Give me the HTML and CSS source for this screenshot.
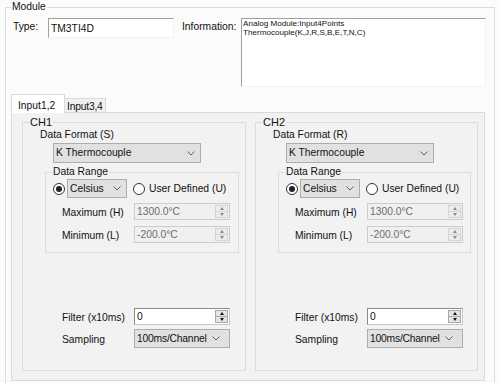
FILE: index.html
```html
<!DOCTYPE html>
<html>
<head>
<meta charset="utf-8">
<link rel="stylesheet" href="styles.css">
</head>
<body>
<fieldset class="module">
  <legend class="legend">Module</legend>
  <div class="info-row">
    <span class="lbl type-lbl">Type:</span>
    <div class="textbox type-box">TM3TI4D</div>
    <span class="lbl info-lbl">Information:</span>
    <div class="textbox info-box">Analog Module:Input4Points<br>Thermocouple(K,J,R,S,B,E,T,N,C)</div>
  </div>
  <div class="tabs">
    <div class="tab tab-active">Input1,2</div>
    <div class="tab tab-inactive">Input3,4</div>
  </div>
  <div class="tabpage">
    <fieldset class="ch">
      <legend class="legend ch-legend">CH1</legend>
      <div class="df-label">Data Format (S)</div>
      <div class="combo df-combo"><span class="combo-text">K Thermocouple</span><svg class="chev" width="8" height="5" viewBox="0 0 8 5"><polyline points="0.5,0.5 4,4 7.5,0.5" fill="none" stroke="#606060" stroke-width="1"/></svg></div>
      <fieldset class="range">
        <legend class="legend range-legend">Data Range</legend>
        <div class="radio-row">
          <span class="radio radio-on"></span>
          <div class="combo unit-combo"><span class="combo-text">Celsius</span><svg class="chev" width="8" height="5" viewBox="0 0 8 5"><polyline points="0.5,0.5 4,4 7.5,0.5" fill="none" stroke="#606060" stroke-width="1"/></svg></div>
          <span class="radio radio-off"></span>
          <span class="radio-lbl">User Defined (U)</span>
        </div>
        <div class="num-row">
          <span class="num-lbl">Maximum (H)</span>
          <div class="spin spin-disabled"><span class="spin-val">1300.0°C</span><div class="spin-btns"><span class="sb sb-up"></span><span class="sb sb-down"></span></div></div>
        </div>
        <div class="num-row num-row-2">
          <span class="num-lbl">Minimum (L)</span>
          <div class="spin spin-disabled"><span class="spin-val">-200.0°C</span><div class="spin-btns"><span class="sb sb-up"></span><span class="sb sb-down"></span></div></div>
        </div>
      </fieldset>
      <div class="bottom">
        <div class="bot-row">
          <span class="num-lbl">Filter (x10ms)</span>
          <div class="spin spin-enabled"><span class="spin-val">0</span><div class="spin-btns"><span class="sb sb-up"></span><span class="sb sb-down"></span></div></div>
        </div>
        <div class="bot-row bot-row-2">
          <span class="num-lbl">Sampling</span>
          <div class="combo samp-combo"><span class="combo-text">100ms/Channel</span><svg class="chev" width="8" height="5" viewBox="0 0 8 5"><polyline points="0.5,0.5 4,4 7.5,0.5" fill="none" stroke="#606060" stroke-width="1"/></svg></div>
        </div>
      </div>
    </fieldset>
    <fieldset class="ch">
      <legend class="legend ch-legend">CH2</legend>
      <div class="df-label">Data Format (R)</div>
      <div class="combo df-combo"><span class="combo-text">K Thermocouple</span><svg class="chev" width="8" height="5" viewBox="0 0 8 5"><polyline points="0.5,0.5 4,4 7.5,0.5" fill="none" stroke="#606060" stroke-width="1"/></svg></div>
      <fieldset class="range">
        <legend class="legend range-legend">Data Range</legend>
        <div class="radio-row">
          <span class="radio radio-on"></span>
          <div class="combo unit-combo"><span class="combo-text">Celsius</span><svg class="chev" width="8" height="5" viewBox="0 0 8 5"><polyline points="0.5,0.5 4,4 7.5,0.5" fill="none" stroke="#606060" stroke-width="1"/></svg></div>
          <span class="radio radio-off"></span>
          <span class="radio-lbl">User Defined (U)</span>
        </div>
        <div class="num-row">
          <span class="num-lbl">Maximum (H)</span>
          <div class="spin spin-disabled"><span class="spin-val">1300.0°C</span><div class="spin-btns"><span class="sb sb-up"></span><span class="sb sb-down"></span></div></div>
        </div>
        <div class="num-row num-row-2">
          <span class="num-lbl">Minimum (L)</span>
          <div class="spin spin-disabled"><span class="spin-val">-200.0°C</span><div class="spin-btns"><span class="sb sb-up"></span><span class="sb sb-down"></span></div></div>
        </div>
      </fieldset>
      <div class="bottom">
        <div class="bot-row">
          <span class="num-lbl">Filter (x10ms)</span>
          <div class="spin spin-enabled"><span class="spin-val">0</span><div class="spin-btns"><span class="sb sb-up"></span><span class="sb sb-down"></span></div></div>
        </div>
        <div class="bot-row bot-row-2">
          <span class="num-lbl">Sampling</span>
          <div class="combo samp-combo"><span class="combo-text">100ms/Channel</span><svg class="chev" width="8" height="5" viewBox="0 0 8 5"><polyline points="0.5,0.5 4,4 7.5,0.5" fill="none" stroke="#606060" stroke-width="1"/></svg></div>
        </div>
      </div>
    </fieldset>
  </div>
</fieldset>
</body>
</html>
```
FILE: styles.css
```css
html, body {
  margin: 0;
  padding: 0;
  background: #fbfbfb;
  overflow: hidden;
  height: 383px;
}
body {
  font-family: "Liberation Sans", Arial, sans-serif;
  font-size: 10.3px;
  line-height: 12px;
  color: #111;
}
.module {
  margin: 0 5px;
  padding: 0;
  border: 1px solid #dcdcdc;
  border-bottom: none;
  min-width: 0;
  height: 383px;
  box-sizing: border-box;
}
.legend {
  padding: 0 1px;
  line-height: 14px;
  margin-left: 5px;
}
.info-row {
  display: flex;
  align-items: flex-start;
  margin-top: 4px;
  padding-left: 7px;
}
.lbl {
  padding-top: 3px;
}
.type-lbl {
  width: 35px;
}
.textbox {
  box-sizing: border-box;
  background: #fff;
  border-top: 1px solid #a0a0a0;
  border-left: 1px solid #a0a0a0;
  border-right: 1px solid #f4f4f4;
  border-bottom: 1px solid #f4f4f4;
}
.type-box {
  width: 126px;
  height: 20px;
  padding: 4px 2px 0;
}
.info-lbl {
  margin-left: 8px;
  width: 59px;
}
.info-box {
  width: 245px;
  height: 69px;
  padding: 1px 1px 0;
  font-size: 8.1px;
  line-height: 8.7px;
}
.tabs {
  display: flex;
  align-items: flex-end;
  margin-top: 7px;
  padding-left: 5px;
}
.tab {
  box-sizing: border-box;
  border: 1px solid #d9d9d9;
  border-bottom: none;
}
.tab-active {
  width: 54px;
  height: 19px;
  margin-bottom: -1px;
  background: #fff;
  padding: 5px 0 0 6px;
  position: relative;
  z-index: 1;
}
.tab-inactive {
  width: 41px;
  height: 14px;
  border-left: none;
  background: #f0f0f0;
  padding: 2px 0 0 2px;
  letter-spacing: -0.2px;
}
.tabpage {
  box-sizing: border-box;
  width: 474px;
  height: 269px;
  margin-left: 5px;
  border: 1px solid #d9d9d9;
  background: #f2f2f2;
  padding: 3px 7px 8px 10px;
  display: grid;
  grid-template-columns: 224px 223px;
  column-gap: 9px;
  align-items: start;
}
.ch {
  margin: 0;
  padding: 0 0 22px;
  border: 1px solid #dcdcdc;
  min-width: 0;
}
.ch-legend {
  line-height: 12px;
  margin-left: 6px;
  font-size: 11px;
}
.df-label {
  margin: 1px 0 0 17px;
}
.combo {
  box-sizing: border-box;
  display: flex;
  align-items: center;
  border: 1px solid #adadad;
  background: #e1e1e1;
  padding: 0 5px 0 2px;
}
.combo-text {
  flex: 1;
}
.chev {
  display: block;
}
.df-combo {
  margin: 2px 0 0 30px;
  width: 148px;
  height: 20px;
}
.range {
  margin: 3px 6px 0 22px;
  padding: 0 0 9px;
  border: 1px solid #dcdcdc;
  min-width: 0;
}
.range-legend {
  line-height: 12px;
  margin-left: 6px;
}
.radio-row {
  display: flex;
  align-items: center;
  margin-top: 1px;
  padding-left: 7px;
  height: 19px;
}
.radio {
  box-sizing: border-box;
  width: 12px;
  height: 12px;
  border: 1px solid #333;
  border-radius: 50%;
  background: #fff;
  display: flex;
  align-items: center;
  justify-content: center;
}
.radio-on::after {
  content: "";
  width: 6px;
  height: 6px;
  border-radius: 50%;
  background: #222;
}
.unit-combo {
  margin-left: 2px;
  width: 60px;
  height: 19px;
}
.radio-off {
  margin-left: 6px;
}
.radio-lbl {
  margin-left: 4px;
}
.num-row {
  display: flex;
  align-items: center;
  margin-top: 5px;
  padding-left: 16px;
}
.num-row-2 {
  margin-top: 6px;
}
.num-lbl {
  width: 72px;
  padding-top: 2px;
}
.spin {
  box-sizing: border-box;
  display: flex;
  width: 96px;
  height: 17px;
  padding: 1px;
}
.spin-disabled {
  border: 1px solid #cccccc;
  background: #f0f0f0;
  color: #6d6d6d;
}
.spin-enabled {
  border: 1px solid #8a8a8a;
  border-right-color: #c8c8c8;
  border-bottom-color: #c8c8c8;
  background: #fff;
}
.spin-val {
  flex: 1;
  padding-left: 1px;
  line-height: 13px;
}
.spin-btns {
  width: 13px;
  display: flex;
  flex-direction: column;
}
.sb {
  flex: 1;
  box-sizing: border-box;
  display: flex;
  align-items: center;
  justify-content: center;
  background: #ececec;
  border: 1px solid #d4d4d4;
}
.sb-down {
  border-top: none;
}
.spin-enabled .sb {
  background: #e4e4e4;
  border-color: #a8a8a8;
}
.sb::after {
  content: "";
  width: 0;
  height: 0;
  border-left: 2.5px solid transparent;
  border-right: 2.5px solid transparent;
}
.sb-up::after {
  border-bottom: 3px solid #8a8a8a;
}
.sb-down::after {
  border-top: 3px solid #8a8a8a;
}
.spin-enabled .sb-up::after {
  border-bottom-color: #111;
}
.spin-enabled .sb-down::after {
  border-top-color: #111;
}
.bottom {
  margin-top: 55px;
  padding-left: 39px;
}
.bot-row {
  display: flex;
  align-items: center;
}
.bot-row-2 {
  margin-top: 4px;
}
.samp-combo {
  width: 96px;
  height: 19px;
  padding-right: 9px;
  letter-spacing: -0.2px;
}
```
